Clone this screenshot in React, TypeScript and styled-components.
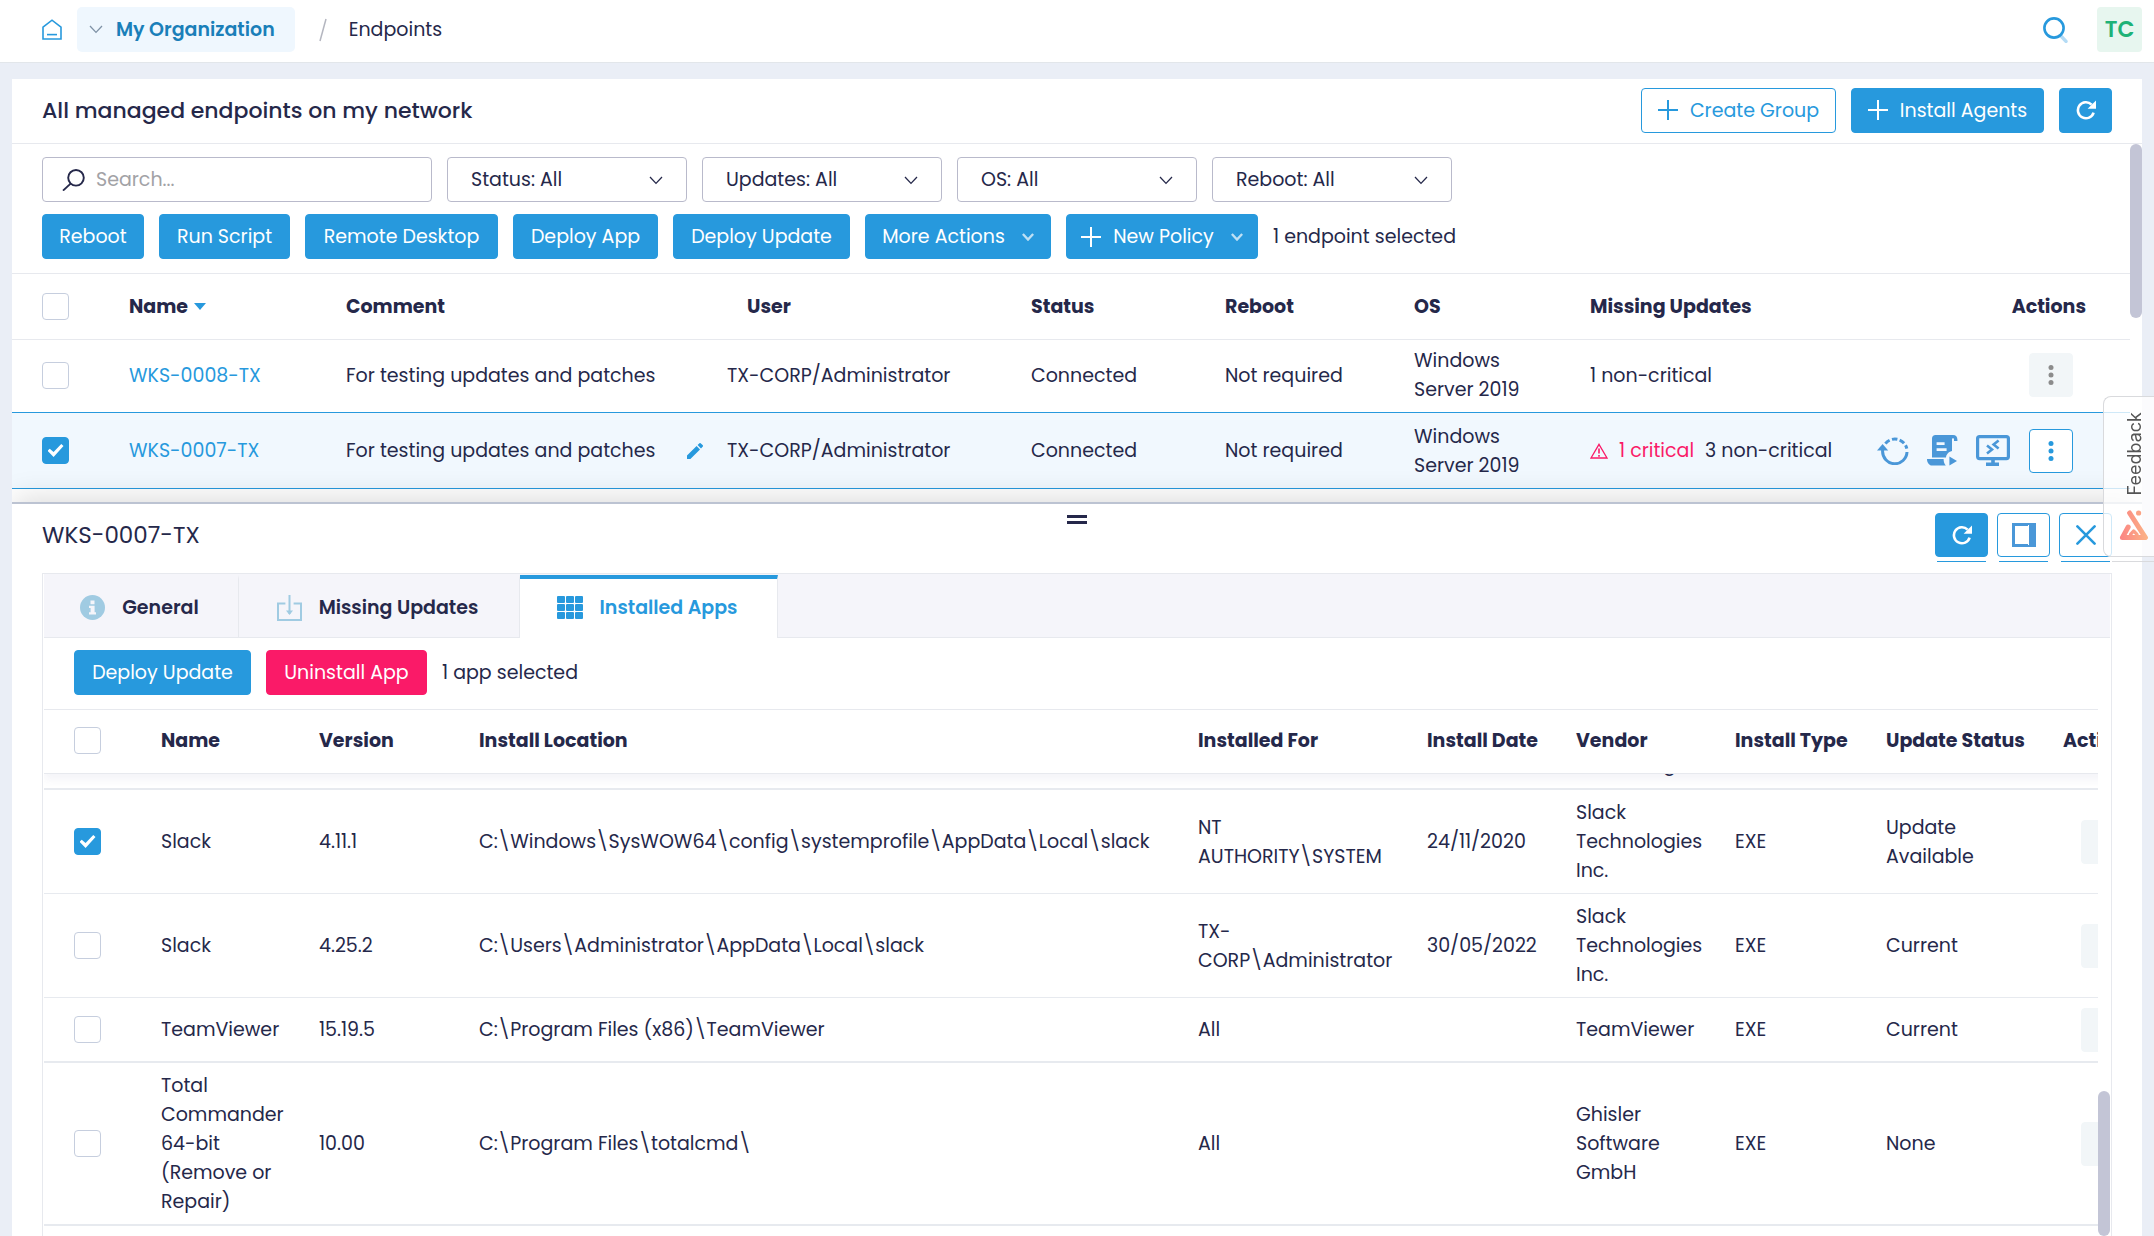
import React, { useLayoutEffect, useRef } from "react";
import styled, { createGlobalStyle, css } from "styled-components";

const c = {
  text: "#25284a",
  blue: "#2799dd",
  icon: "#4a97d8",
  pink: "#fa1a68",
  line: "#e7e9ee",
  page: "#eaeef6",
  thumb: "#c3c5d6",
};

const GlobalStyle = createGlobalStyle`
  *, *::before, *::after { box-sizing: border-box; }
  body {
    margin: 0;
    background: ${c.page};
    color: ${c.text};
    font-family: Poppins, Inter, "Open Sans", sans-serif;
    font-size: 19px;
    line-height: 29px;
  }
  button, input, select { font: inherit; color: inherit; }
  svg { display: block; flex: none; }
`;

const Shell = styled.div`
  display: flex;
  flex-direction: column;
  height: 100vh;
  overflow: hidden;
`;

const TopBar = styled.header`
  display: flex;
  align-items: center;
  flex: none;
  height: 63px;
  padding: 0 12px 3px 42px;
  background: #fff;
  border-bottom: 1px solid #e2e6ea;
`;

const Crumbs = styled.nav`
  display: flex;
  align-items: center;
`;

const IconLink = styled.a`
  display: flex;
  margin-right: 15px;
  color: ${c.blue};
`;

const OrgButton = styled.button`
  display: flex;
  align-items: center;
  gap: 13px;
  height: 45px;
  padding: 0 20px 0 12px;
  border: 0;
  border-radius: 5px;
  background: #eff7fe;
  color: #1a7fb9;
  font-weight: 600;
  > svg { color: #7f92a6; }
`;

const Slash = styled.span`
  display: flex;
  margin: 0 22px 0 24px;
`;

const TopTools = styled.div`
  display: flex;
  align-items: center;
  gap: 29px;
  margin-left: auto;
`;

const PlainButton = styled.button`
  display: flex;
  padding: 0;
  border: 0;
  background: none;
  color: ${c.blue};
`;

const Avatar = styled.button`
  width: 45px;
  height: 45px;
  padding: 0;
  border: 0;
  border-radius: 4px;
  background: #e7f6ef;
  color: #1fb277;
  font-size: 22px;
  font-weight: 600;
`;

const Panel = styled.main`
  display: flex;
  flex-direction: column;
  flex: 1;
  min-height: 0;
  margin: 16px 12px 0;
  background: #fff;
  overflow: hidden;
`;

const PanelHead = styled.div`
  display: flex;
  align-items: center;
  justify-content: space-between;
  flex: none;
  height: 65px;
  padding: 0 30px 2px;
  border-bottom: 1px solid ${c.line};
`;

const Title = styled.h1`
  margin: 0;
  font-size: 22px;
  font-weight: 500;
`;

const ButtonRow = styled.div<{ $gap?: number }>`
  display: flex;
  align-items: center;
  gap: ${(p) => p.$gap ?? 15}px;
`;

const Button = styled.button<{ $tone?: "solid" | "outline" | "danger"; $w?: number }>`
  display: flex;
  align-items: center;
  justify-content: center;
  gap: 12px;
  flex: none;
  height: 45px;
  min-width: ${(p) => p.$w ?? 53}px;
  padding: 0 8px;
  border: 1px solid ${(p) => (p.$tone === "danger" ? c.pink : c.blue)};
  border-radius: 4px;
  background: ${(p) => (p.$tone === "outline" ? "#fff" : p.$tone === "danger" ? c.pink : c.blue)};
  color: ${(p) => (p.$tone === "outline" ? c.blue : "#fff")};
  white-space: nowrap;
`;

const MenuArrow = styled.span`
  display: flex;
  margin-left: 5px;
  opacity: 0.7;
`;

const Pane = styled.section`
  display: flex;
  flex: none;
`;

const PaneBody = styled.div`
  flex: 1;
  min-width: 0;
  padding-bottom: 13px;
`;

const Filters = styled.div`
  display: flex;
  flex-direction: column;
  gap: 12px;
  padding: 13px 30px 14px;
  border-bottom: 1px solid ${c.line};
`;

const field = css`
  height: 45px;
  border: 1px solid #b9bacb;
  border-radius: 4px;
  background: #fff;
`;

const SearchBox = styled.label`
  ${field}
  display: flex;
  align-items: center;
  gap: 11px;
  width: 390px;
  padding: 0 19px;
`;

const SearchInput = styled.input`
  flex: 1;
  min-width: 0;
  padding: 0;
  border: 0;
  outline: 0;
  background: none;
  &::placeholder { color: #a2a2a6; }
`;

const SelectWrap = styled.div`
  display: grid;
  align-items: center;
  width: 240px;
  > * { grid-area: 1 / 1; }
  > svg { justify-self: end; margin: 2px 24px 0 0; pointer-events: none; }
`;

const Select = styled.select`
  ${field}
  width: 100%;
  padding: 0 48px 0 23px;
  appearance: none;
`;

const Thumb = styled.div<{ $top?: number; $height?: number }>`
  flex: none;
  width: 12px;
  margin-top: ${(p) => p.$top ?? 0}px;
  height: ${(p) => (p.$height ? `${p.$height}px` : "auto")};
  border-radius: 6px;
  background: ${c.thumb};
`;

const Check = styled.input.attrs({ type: "checkbox" })`
  display: grid;
  place-items: center;
  appearance: none;
  width: 27px;
  height: 27px;
  margin: 0;
  border: 1px solid #c6cede;
  border-radius: 4px;
  background: #fff;
  &:checked { border-color: ${c.blue}; background: ${c.blue}; }
  &:checked::after {
    content: "";
    width: 16px;
    height: 13px;
    background: #fff;
    clip-path: polygon(0 52%, 14% 36%, 38% 62%, 86% 0, 100% 16%, 38% 100%);
  }
`;

const Table = styled.table<{ $extra?: number }>`
  width: calc(100% + ${(p) => p.$extra ?? 0}px);
  table-layout: fixed;
  border-collapse: separate;
  border-spacing: 0;
`;

const Col = styled.col<{ $w?: number }>`
  width: ${(p) => (p.$w ? `${p.$w}px` : "auto")};
`;

const StickyHead = styled.thead`
  position: sticky;
  top: 0;
  z-index: 1;
  box-shadow: 0 6px 8px rgba(60, 70, 130, 0.06);
  th { padding-bottom: 2px; }
`;

const Th = styled.th<{ $indent?: number; $right?: boolean; $h: number }>`
  height: ${(p) => p.$h}px;
  padding: 0 ${(p) => (p.$right ? 44 : 0)}px 0 ${(p) => p.$indent ?? 0}px;
  border-bottom: 1px solid ${c.line};
  background: #fff;
  font-weight: 700;
  text-align: ${(p) => (p.$right ? "right" : "left")};
  white-space: nowrap;
`;

const Td = styled.td<{ $indent?: number; $h?: number; $line?: number }>`
  height: ${(p) => p.$h ?? 64}px;
  padding: 7px 0 7px ${(p) => p.$indent ?? 0}px;
  border-bottom: ${(p) => p.$line ?? 1}px solid #e7eaef;
  white-space: pre-line;
`;

const Row = styled.tr<{ $selected?: boolean }>`
  ${(p) =>
    p.$selected
      ? css`
          background: #f1f8fe;
          > td { border-top: 1px solid ${c.blue}; border-bottom: 1px solid ${c.blue}; }
        `
      : css`
          > td { border-bottom: 0; padding-top: 6px; padding-bottom: 8px; }
        `}
`;

const SortButton = styled.button`
  display: flex;
  align-items: center;
  gap: 6px;
  padding: 0;
  border: 0;
  background: none;
  font-weight: 700;
`;

const HostLink = styled.a`
  color: ${c.blue};
  text-decoration: none;
`;

const Comment = styled.div`
  display: flex;
  align-items: center;
  justify-content: space-between;
  padding-right: 24px;
`;

const Updates = styled.div`
  display: flex;
  align-items: center;
  gap: 11px;
  color: ${c.text};
  white-space: nowrap;
`;

const Critical = styled.span`
  display: flex;
  align-items: center;
  gap: 11px;
  color: ${c.pink};
`;

const RowActions = styled.div`
  display: flex;
  align-items: center;
  justify-content: flex-end;
  gap: 18px;
  padding-right: 57px;
  > button { color: ${c.icon}; }
  > :last-child:not(:first-child) { margin-left: 1px; }
`;

const Kebab = styled.button<{ $active?: boolean }>`
  display: flex;
  align-items: center;
  justify-content: center;
  flex: none;
  width: 44px;
  height: 44px;
  padding: 0;
  border: 1px solid ${(p) => (p.$active ? c.blue : "#f2f6f8")};
  border-radius: 4px;
  background: ${(p) => (p.$active ? "#fff" : "#f2f6f8")};
  && { color: ${(p) => (p.$active ? c.blue : "#8c8c8c")}; }
`;

const Detail = styled.section`
  position: relative;
  display: flex;
  flex-direction: column;
  flex: 1;
  min-height: 0;
  padding: 0 30px;
  border-top: 2px solid #bcc3d2;
  background: #fff;
  box-shadow: 0 -6px 28px -2px rgba(0, 0, 0, 0.14);
`;

const DetailHead = styled.div`
  display: grid;
  grid-template-columns: 1fr auto 1fr;
  flex: none;
  height: 69px;
`;

const DetailTitle = styled.h2`
  align-self: center;
  margin: 0 0 6px;
  font-size: 23px;
  font-weight: 400;
`;

const Grip = styled.button`
  width: 20px;
  height: 9px;
  margin: 11px 0 0;
  padding: 0;
  border: solid ${c.text};
  border-width: 3px 0;
  background: #fff;
`;

const DetailTools = styled(ButtonRow)`
  align-items: flex-start;
  justify-content: flex-end;
  padding-top: 9px;
  > button {
    position: relative;
    height: 44px;
  }
  > button::after {
    content: "";
    position: absolute;
    left: 1px;
    right: 1px;
    bottom: -6px;
    height: 1px;
    background: ${c.blue};
  }
`;

const Card = styled.div`
  display: flex;
  flex-direction: column;
  flex: 1;
  min-height: 0;
  border: 1px solid ${c.line};
  border-bottom: 0;
  padding: 0 1px;
`;

const Tabs = styled.div`
  display: flex;
  flex: none;
  height: 64px;
  padding-top: 1px;
  background: #f5f5fa;
  box-shadow: inset 0 -1px 0 ${c.line};
`;

const Tab = styled.button<{ $active?: boolean; $w: number }>`
  display: flex;
  align-items: center;
  justify-content: center;
  gap: 17px;
  min-width: ${(p) => p.$w}px;
  border: 0;
  border-right: 1px solid ${c.line};
  border-top: 4px solid ${(p) => (p.$active ? c.blue : "transparent")};
  padding: 0 3px 2px 0;
  background: ${(p) => (p.$active ? "#fff" : "none")};
  color: ${(p) => (p.$active ? c.blue : c.text)};
  font-weight: 600;
  > svg { color: ${(p) => (p.$active ? c.blue : "#a0cbe2")}; }
`;

const AppBar = styled(ButtonRow)`
  flex: none;
  padding: 12px 30px 14px;
`;

const Body = styled.div`
  display: flex;
  flex: 1;
  min-height: 0;
`;

const Scroller = styled.div`
  position: relative;
  flex: 1;
  min-width: 0;
  padding-bottom: 24px;
  border-top: 1px solid ${c.line};
  overflow: auto;
  scrollbar-width: none;
`;

const Feedback = styled.a`
  position: fixed;
  top: 396px;
  right: 0;
  z-index: 5;
  display: flex;
  flex-direction: column;
  align-items: flex-end;
  justify-content: space-between;
  width: 51px;
  height: 161px;
  padding: 15px 5px;
  border: 1px solid #d9dadd;
  border-right: 0;
  border-radius: 8px 0 0 8px;
  background: rgba(255, 255, 255, 0.78);
  color: #555;
  font-family: Inter, sans-serif;
  font-size: 18px;
  line-height: 20px;
  text-decoration: none;
  &::after {
    content: "";
    position: absolute;
    left: 8px;
    right: 0;
    bottom: -6px;
    height: 1px;
    background: #d9dadd;
  }
`;

const FeedbackText = styled.span`
  padding-left: 4px;
  writing-mode: vertical-rl;
  transform: rotate(180deg);
`;

const HomeIcon = () => (
  <svg width="20" height="21" viewBox="0 0 20 21" fill="none" stroke="currentColor" strokeWidth="1.6">
    <path d="M1 8.2 10 1.2l9 7V20H1Z" />
    <path d="M5 15.6h10" />
  </svg>
);

const Chevron = ({ size = 14, weight = 1.3 }: { size?: number; weight?: number }) => (
  <svg width={size} height={size / 2 + 2} viewBox="0 0 14 9" fill="none" stroke="currentColor" strokeWidth={weight}>
    <path d="m1 1 6 6.4L13 1" />
  </svg>
);

const Plus = () => (
  <svg width="20" height="20" viewBox="0 0 20 20" stroke="currentColor" strokeWidth="2">
    <path d="M10 0v20M0 10h20" />
  </svg>
);

const Refresh = () => (
  <svg width="20" height="20" viewBox="0 0 20 20" fill="none">
    <path d="M17.6 12.6A8 8 0 1 1 15.6 4.6" stroke="currentColor" strokeWidth="2.6" />
    <path d="M20 .6V8.8h-8.4Z" fill="currentColor" />
  </svg>
);

const Dots = () => (
  <svg width="6" height="20" viewBox="0 0 6 20" fill="currentColor">
    <circle cx="3" cy="2.6" r="2.5" />
    <circle cx="3" cy="10" r="2.5" />
    <circle cx="3" cy="17.4" r="2.5" />
  </svg>
);

const Lens = () => (
  <svg width="23" height="22" viewBox="0 0 23 22" fill="none" stroke={c.text} strokeWidth="1.9">
    <circle cx="14" cy="8.8" r="7.8" />
    <path d="m8.6 14.6-7.6 7" />
  </svg>
);

const TopLens = () => (
  <svg width="25" height="26" viewBox="0 0 25 26" fill="none">
    <path d="m18 19 5 5.4" stroke="#b4dbf5" strokeWidth="3.4" strokeLinecap="round" />
    <circle cx="11" cy="11" r="9.6" stroke={c.blue} strokeWidth="2.6" />
  </svg>
);

const Pencil = () => (
  <svg width="16" height="16" viewBox="0 0 16 16" fill={c.blue}>
    <path d="M0 16v-3.4L9.6 3 13 6.4 3.4 16ZM10.6 2l1.6-1.6a1.2 1.2 0 0 1 1.7 0l1.7 1.7a1.2 1.2 0 0 1 0 1.7L14 5.4Z" />
  </svg>
);

const Warning = () => (
  <svg width="18" height="16" viewBox="0 0 18 16" fill="none" stroke={c.pink}>
    <path d="M9 1.4 17 15H1Z" strokeWidth="1.3" />
    <path d="M9 5.6v5M9 12v1.7" strokeWidth="1.6" />
  </svg>
);

const Restart = () => (
  <svg width="32" height="28" viewBox="0 0 32 28" fill="none" stroke="currentColor" strokeWidth="3">
    <path d="M5.6 11.4V14a12.2 12.2 0 0 0 24.4 1" />
    <path d="M8.4 6.6A12.2 12.2 0 0 1 29.8 11.6" strokeDasharray="5.4 2.4" />
    <path d="M0 13.4 5.6 7l5.6 6.4Z" fill="currentColor" stroke="none" />
  </svg>
);

const Script = () => (
  <svg width="31" height="31" viewBox="0 0 31 31" fill="none">
    <path
      d="M8.4 0H26c3 0 4.4 2 4.4 4.4V6H27V4.4C27 3 25 3 25 4.4V16c-4 1-6 4-6 6.6H5V3.4C5 1.4 6.4 0 8.4 0Z"
      fill="currentColor"
    />
    <path d="M9.6 8.6h8M9.6 14.6h10" stroke="#f1f8fe" strokeWidth="2.8" />
    <path d="M0 24h16.6c0 2.6.8 5 2.2 6.6H5.4C2.4 30.6 0 28 0 24ZM22.4 21.4l7.6 4.6-7.6 4.6Z" fill="currentColor" />
  </svg>
);

const Remote = () => (
  <svg width="34" height="31" viewBox="0 0 34 31" fill="none" stroke="currentColor">
    <rect x="1.6" y="1.6" width="30.8" height="22" rx="2" strokeWidth="3.2" />
    <path d="M17 24v5M10 29.4h13" strokeWidth="3.6" />
    <path d="m11 10.6 5 4-5 4M22.6 5.6l-5 4 5 4" strokeWidth="2.6" />
  </svg>
);

const SidePanel = () => (
  <svg width="24" height="24" viewBox="0 0 24 24" fill={c.icon}>
    <path fillRule="evenodd" d="M0 0h24v24H0ZM3 3v18h13V3Z" />
    <path d="M16 2h1v20h-1Z" fill="#fff" />
  </svg>
);

const Cross = () => (
  <svg width="20" height="20" viewBox="0 0 20 20" stroke="currentColor" strokeWidth="2.6" strokeLinecap="round">
    <path d="m1.4 1.4 17.2 17.2M18.6 1.4 1.4 18.6" />
  </svg>
);

const Info = () => (
  <svg width="25" height="25" viewBox="0 0 25 25">
    <circle cx="12.5" cy="12.5" r="12.5" fill="currentColor" />
    <path d="M10.5 5.6h4v3.6h-4ZM9 10.8h5.6v6.4H16v2.2H9v-2.2h1.6v-4.2H9Z" fill="#f5f5fa" />
  </svg>
);

const Download = () => (
  <svg width="25" height="26" viewBox="0 0 25 26" fill="none" stroke="currentColor" strokeWidth="2">
    <path d="M8.4 8.6H1V25h23V8.6h-7.4M12.5 0v19" />
    <path d="m9 15.6 3.5 4.4 3.5-4.4Z" fill="currentColor" stroke="none" />
  </svg>
);

const GridIcon = () => (
  <svg width="26" height="23" viewBox="0 0 26 23" fill="currentColor">
    {[0, 9, 18].map((x) =>
      [0, 8, 16].map((y) => <rect key={`${x}-${y}`} x={x} y={y} width="8" height="7" rx="1" />)
    )}
  </svg>
);

const FeedbackLogo = () => (
  <svg width="30" height="31" viewBox="0 0 30 31">
    <defs>
      <linearGradient id="fb" x1="0" y1="0" x2="30" y2="0" gradientUnits="userSpaceOnUse">
        <stop offset="0" stopColor="#fb8383" />
        <stop offset="1" stopColor="#fbb585" />
      </linearGradient>
    </defs>
    <g fill="none" stroke="url(#fb)" strokeLinecap="round" strokeLinejoin="round">
      <path d="M10.6 3 26.4 27.6H3.4L9.2 17" strokeWidth="5" />
      <path d="m11.6 24.4 3-3.4 3.4 3.4" strokeWidth="3.4" />
    </g>
    <circle cx="19.6" cy="3" r="2.6" fill="#fba385" />
  </svg>
);

const filters = ["Status: All", "Updates: All", "OS: All", "Reboot: All"];

const actions: { label: string; w: number; plus?: boolean; menu?: boolean }[] = [
  { label: "Reboot", w: 102 },
  { label: "Run Script", w: 131 },
  { label: "Remote Desktop", w: 193 },
  { label: "Deploy App", w: 145 },
  { label: "Deploy Update", w: 177 },
  { label: "More Actions", w: 186, menu: true },
  { label: "New Policy", w: 192, plus: true, menu: true },
];

type AppRow = {
  name: string;
  version: string;
  path: string;
  user: string;
  date: string;
  vendor: string;
  status: string;
  line: number;
  checked?: boolean;
  h: number;
};

const apps: AppRow[] = [
  { name: "Slack", version: "4.4.2", path: "C:\\Program Files\\Slack", user: "All", date: "", vendor: "Slack\nTechnologies", status: "None", line: 2, h: 78 },
  { name: "Slack", version: "4.11.1", path: "C:\\Windows\\SysWOW64\\config\\systemprofile\\AppData\\Local\\slack", user: "NT\nAUTHORITY\\SYSTEM", date: "24/11/2020", vendor: "Slack\nTechnologies\nInc.", status: "Update\nAvailable", line: 1, checked: true, h: 104 },
  { name: "Slack", version: "4.25.2", path: "C:\\Users\\Administrator\\AppData\\Local\\slack", user: "TX-\nCORP\\Administrator", date: "30/05/2022", vendor: "Slack\nTechnologies\nInc.", status: "Current", line: 1, h: 104 },
  { name: "TeamViewer", version: "15.19.5", path: "C:\\Program Files (x86)\\TeamViewer", user: "All", date: "", vendor: "TeamViewer", status: "Current", line: 2, h: 65 },
  { name: "Total\nCommander\n64-bit\n(Remove or\nRepair)", version: "10.00", path: "C:\\Program Files\\totalcmd\\", user: "All", date: "", vendor: "Ghisler\nSoftware\nGmbH", status: "None", line: 2, h: 163 },
];

const appHeads = ["Name", "Version", "Install Location", "Installed For", "Install Date", "Vendor", "Install Type", "Update Status", "Actions"];

export default function App() {
  const scroller = useRef<HTMLDivElement>(null);
  const current = useRef<HTMLTableRowElement>(null);

  // Bring the selected app just below the sticky header.
  useLayoutEffect(() => {
    if (scroller.current && current.current) {
      scroller.current.scrollTop = current.current.offsetTop - 80;
    }
  }, []);

  return (
    <Shell>
      <GlobalStyle />
      <TopBar>
        <Crumbs aria-label="Breadcrumb">
          <IconLink href="#" aria-label="Home"><HomeIcon /></IconLink>
          <OrgButton type="button"><Chevron />My Organization</OrgButton>
          <Slash>
            <svg width="8" height="24" viewBox="0 0 8 24" stroke="#b4b6c0" strokeWidth="1.5"><path d="M7 1 1 23" /></svg>
          </Slash>
          <span>Endpoints</span>
        </Crumbs>
        <TopTools>
          <PlainButton type="button" aria-label="Search"><TopLens /></PlainButton>
          <Avatar type="button">TC</Avatar>
        </TopTools>
      </TopBar>

      <Panel>
        <PanelHead>
          <Title>All managed endpoints on my network</Title>
          <ButtonRow>
            <Button type="button" $tone="outline" $w={195}><Plus />Create Group</Button>
            <Button type="button" $w={193}><Plus />Install Agents</Button>
            <Button type="button" aria-label="Refresh"><Refresh /></Button>
          </ButtonRow>
        </PanelHead>

        <Pane>
          <PaneBody>
            <Filters>
              <ButtonRow>
                <SearchBox>
                  <Lens />
                  <SearchInput placeholder="Search..." aria-label="Search endpoints" />
                </SearchBox>
                {filters.map((f) => (
                  <SelectWrap key={f}>
                    <Select aria-label={f.split(":")[0]}><option>{f}</option></Select>
                    <Chevron />
                  </SelectWrap>
                ))}
              </ButtonRow>
              <ButtonRow>
                {actions.map((a) => (
                  <Button type="button" key={a.label} $w={a.w}>
                    {a.plus && <Plus />}
                    {a.label}
                    {a.menu && <MenuArrow><Chevron size={12} weight={2.8} /></MenuArrow>}
                  </Button>
                ))}
                <span>1 endpoint selected</span>
              </ButtonRow>
            </Filters>

            <Table>
              <colgroup>
                <Col $w={117} /><Col $w={217} /><Col $w={381} /><Col $w={304} /><Col $w={194} />
                <Col $w={189} /><Col $w={176} /><Col /><Col $w={260} />
              </colgroup>
              <thead>
                <tr>
                  <Th $h={66} $indent={30}><Check aria-label="Select all endpoints" /></Th>
                  <Th $h={66}>
                    <SortButton type="button">
                      Name
                      <svg width="12" height="7" viewBox="0 0 12 7" fill={c.blue}><path d="M0 0h12L6 7Z" /></svg>
                    </SortButton>
                  </Th>
                  <Th $h={66}>Comment</Th>
                  <Th $h={66} $indent={20}>User</Th>
                  <Th $h={66}>Status</Th>
                  <Th $h={66}>Reboot</Th>
                  <Th $h={66}>OS</Th>
                  <Th $h={66}>Missing Updates</Th>
                  <Th $h={66} $right>Actions</Th>
                </tr>
              </thead>
              <tbody>
                <Row>
                  <Td $h={72} $indent={30}><Check aria-label="Select WKS-0008-TX" /></Td>
                  <Td><HostLink href="#">WKS-0008-TX</HostLink></Td>
                  <Td>For testing updates and patches</Td>
                  <Td>TX-CORP/Administrator</Td>
                  <Td>Connected</Td>
                  <Td>Not required</Td>
                  <Td>{"Windows\nServer 2019"}</Td>
                  <Td>1 non-critical</Td>
                  <Td>
                    <RowActions><Kebab type="button" aria-label="More"><Dots /></Kebab></RowActions>
                  </Td>
                </Row>
                <Row $selected>
                  <Td $h={77} $indent={30}><Check defaultChecked aria-label="Select WKS-0007-TX" /></Td>
                  <Td><HostLink href="#">WKS-0007-TX</HostLink></Td>
                  <Td>
                    <Comment>
                      For testing updates and patches
                      <PlainButton type="button" aria-label="Edit comment"><Pencil /></PlainButton>
                    </Comment>
                  </Td>
                  <Td>TX-CORP/Administrator</Td>
                  <Td>Connected</Td>
                  <Td>Not required</Td>
                  <Td>{"Windows\nServer 2019"}</Td>
                  <Td>
                    <Updates><Critical><Warning />1 critical</Critical>3 non-critical</Updates>
                  </Td>
                  <Td>
                    <RowActions>
                      <PlainButton type="button" aria-label="Reboot"><Restart /></PlainButton>
                      <PlainButton type="button" aria-label="Run script"><Script /></PlainButton>
                      <PlainButton type="button" aria-label="Remote desktop"><Remote /></PlainButton>
                      <Kebab type="button" aria-label="More" $active><Dots /></Kebab>
                    </RowActions>
                  </Td>
                </Row>
              </tbody>
            </Table>
          </PaneBody>
          <Thumb $height={174} />
        </Pane>

        <Detail>
          <DetailHead>
            <DetailTitle>WKS-0007-TX</DetailTitle>
            <Grip type="button" aria-label="Resize panel" />
            <DetailTools $gap={9}>
              <Button type="button" aria-label="Refresh details"><Refresh /></Button>
              <Button type="button" $tone="outline" aria-label="Dock to side"><SidePanel /></Button>
              <Button type="button" $tone="outline" aria-label="Close"><Cross /></Button>
            </DetailTools>
          </DetailHead>

          <Card>
            <Tabs role="tablist">
              <Tab type="button" role="tab" $w={195}><Info />General</Tab>
              <Tab type="button" role="tab" $w={281}><Download />Missing Updates</Tab>
              <Tab type="button" role="tab" aria-selected $active $w={258}><GridIcon />Installed Apps</Tab>
            </Tabs>
            <AppBar>
              <Button type="button" $w={177}>Deploy Update</Button>
              <Button type="button" $tone="danger" $w={161}>Uninstall App</Button>
              <span>1 app selected</span>
            </AppBar>
            <Body>
              <Scroller ref={scroller}>
                <Table $extra={85}>
                  <colgroup>
                    <Col $w={117} /><Col $w={158} /><Col $w={160} /><Col /><Col $w={229} />
                    <Col $w={149} /><Col $w={159} /><Col $w={151} /><Col $w={177} /><Col $w={120} />
                  </colgroup>
                  <StickyHead>
                    <tr>
                      <Th $h={64} $indent={30}><Check aria-label="Select all apps" /></Th>
                      {appHeads.map((h) => <Th key={h} $h={64}>{h}</Th>)}
                    </tr>
                  </StickyHead>
                  <tbody>
                    {apps.map((a) => (
                      <tr key={a.version} ref={a.checked ? current : undefined}>
                        <Td $h={a.h} $line={a.line} $indent={30}>
                          <Check defaultChecked={a.checked} aria-label={`Select ${a.name} ${a.version}`} />
                        </Td>
                        <Td $line={a.line}>{a.name}</Td>
                        <Td $line={a.line}>{a.version}</Td>
                        <Td $line={a.line}>{a.path}</Td>
                        <Td $line={a.line}>{a.user}</Td>
                        <Td $line={a.line}>{a.date}</Td>
                        <Td $line={a.line}>{a.vendor}</Td>
                        <Td $line={a.line}>EXE</Td>
                        <Td $line={a.line}>{a.status}</Td>
                        <Td $line={a.line} $indent={18}>
                          <Kebab type="button" aria-label="More"><Dots /></Kebab>
                        </Td>
                      </tr>
                    ))}
                  </tbody>
                </Table>
              </Scroller>
              <Thumb $top={382} />
            </Body>
          </Card>
        </Detail>
      </Panel>

      <Feedback href="#">
        <FeedbackText>Feedback</FeedbackText>
        <FeedbackLogo />
      </Feedback>
    </Shell>
  );
}
